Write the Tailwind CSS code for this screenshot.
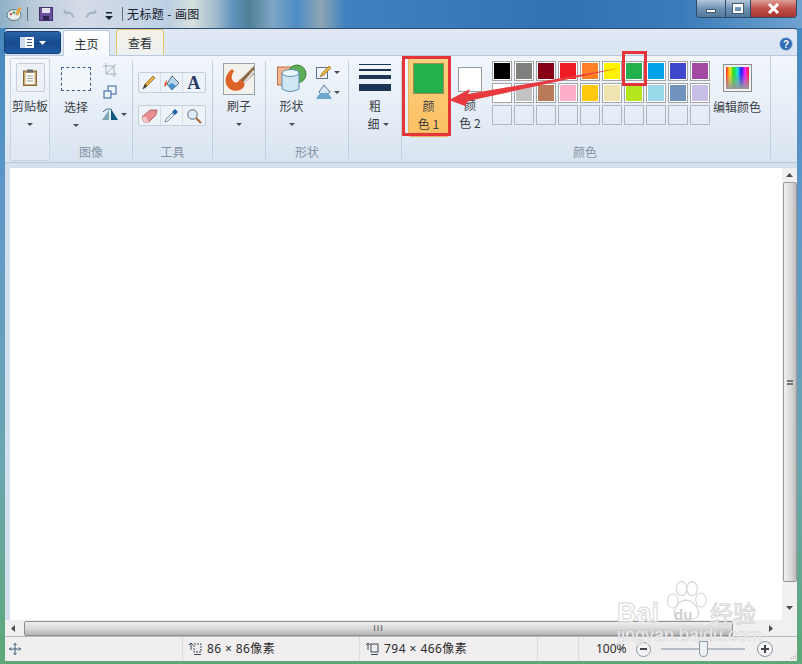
<!DOCTYPE html>
<html lang="zh">
<head>
<meta charset="UTF-8">
<title>无标题 - 画图</title>
<script src="https://cdn.jsdelivr.net/npm/@tailwindcss/browser@4"></script>
</head>
<body class="w-[802px] h-[664px] overflow-hidden font-['Noto_Sans_CJK_SC','Noto_Sans',sans-serif] text-[12px] text-[#3c4046]">
<div class="relative w-[802px] h-[664px] overflow-hidden flex flex-col bg-[linear-gradient(180deg,#3f86bd_0%,#5f97c8_30%,#6aa6b0_70%,#5da877_100%)] px-[5px] pb-[3px]">

  <!-- 标题栏 -->
  <div class="relative h-[28px] -mx-[5px] px-[5px] shrink-0 flex items-center bg-[linear-gradient(90deg,#8fb0c8_0%,#b9c9d8_4%,#d6dbe8_10%,#c4d4e6_18%,#bccfe2_21%,#d6e0dc_24%,#9fb9cc_27%,#5f93bd_29%,#4f7f98_31%,#7ea6c4_34%,#4d8cc4_37%,#8ea5b4_40%,#3f82c0_43%,#2f73b3_70%,#3a7cba_85%,#6fa2cf_100%)]">
    <svg class="ml-[1px]" width="16" height="16" viewBox="0 0 16 16"><ellipse cx="8" cy="9" rx="7" ry="5.5" fill="#e8edf0" stroke="#5a7a70"/><circle cx="5" cy="8" r="1.3" fill="#d9534f"/><circle cx="8" cy="6.5" r="1.3" fill="#4c9f50"/><circle cx="11" cy="8" r="1.3" fill="#3d78c2"/><rect x="11" y="1" width="3" height="8" fill="#e8a33d" transform="rotate(25 12 5)"/></svg>
    <div class="w-px h-[14px] bg-[#5d7380] ml-[5px]"></div>
    <svg class="ml-[11px]" width="14" height="14" viewBox="0 0 14 14"><rect x="0.5" y="0.5" width="13" height="13" fill="#6c4f9c" stroke="#43306f"/><rect x="3" y="1" width="8" height="5" fill="#e4e2ee"/><rect x="4" y="9" width="6" height="4" fill="#2f2550"/></svg>
    <svg class="ml-[9px]" width="14" height="12" viewBox="0 0 16 12"><path d="M13 10C12 5 8 3 3 5M3 5V1M3 5H8" fill="none" stroke="#a4b4c0" stroke-width="2.2"/></svg>
    <svg class="ml-[8px]" width="14" height="12" viewBox="0 0 16 12"><path d="M3 10C4 5 8 3 13 5M13 5V1M13 5H8" fill="none" stroke="#a4b4c0" stroke-width="2.2"/></svg>
    <svg class="ml-[7px] mt-[3px]" width="8" height="8" viewBox="0 0 8 8"><rect x="1" y="0" width="6" height="1.5" fill="#1c2530"/><path d="M0 4H8L4 8Z" fill="#1c2530"/></svg>
    <div class="w-px h-[14px] bg-[#5d7380] ml-[9px]"></div>
    <span class="ml-[4px] text-[12px] tracking-[.4px] text-[#14202c]">无标题 - 画图</span>
    <!-- 窗口按钮 -->
    <div class="absolute right-[5px] top-0 h-[18px] w-[101px] flex rounded-b-[4px] border border-t-0 border-[#2d4a66] overflow-hidden">
      <div class="w-[28px] flex items-center justify-center bg-[linear-gradient(180deg,#b4c8da,#6f92b2_50%,#55799b)]"><div class="w-[10px] h-[4px] mt-[4px] bg-white border border-[#44596e]"></div></div>
      <div class="w-[26px] flex items-center justify-center border-x border-[#2d4a66] bg-[linear-gradient(180deg,#b4c8da,#6f92b2_50%,#55799b)]"><div class="w-[10px] h-[9px] border-2 border-t-[3px] border-white outline outline-[#44596e]"></div></div>
      <div class="flex-1 flex items-center justify-center bg-[linear-gradient(180deg,#dd9f96,#c0504a_50%,#a8342e)]">
        <svg width="13" height="11" viewBox="0 0 13 11"><path d="M2 1L11 10M11 1L2 10" stroke="#fff" stroke-width="3"/></svg>
      </div>
    </div>
  </div>

  <!-- 选项卡行 -->
  <div class="h-[27px] shrink-0 flex items-end bg-[linear-gradient(180deg,#dfe8f4,#dbe5f2)] border-t border-[#33506e] rounded-t-[3px] relative">
    <div class="ml-[-1px] mb-[1px] w-[57px] h-[23px] self-start mt-[2px] rounded-[3px] flex items-center justify-center gap-[5px] bg-[linear-gradient(180deg,#2a62a8,#174b8c_50%,#1d5aa3)] border border-[#173f72]">
      <svg width="14" height="11" viewBox="0 0 14 11"><rect width="5" height="11" fill="#cfdcec"/><rect x="5" width="9" height="11" fill="#fff"/><path d="M7 2.5H12M7 5.5H12M7 8.5H12" stroke="#3a5f90"/></svg>
      <svg width="7" height="4" viewBox="0 0 7 4"><path d="M0 0H7L3.5 4Z" fill="#fff"/></svg>
    </div>
    <div class="ml-[2px] w-[47px] h-[26px] rounded-t-[3px] border border-b-0 border-[#bccbdc] bg-[linear-gradient(180deg,#fff,#f4f8fc)] flex items-center justify-center relative top-px z-10 text-[#2c3138]">主页</div>
    <div class="ml-[6px] w-[48px] h-[26px] rounded-t-[3px] border border-b-0 border-[#e6c47c] bg-[linear-gradient(180deg,#f4f1e6,#eef1f2)] flex items-center justify-center text-[#2c3138]">查看</div>
    <svg class="absolute right-[4px] top-[8px]" width="14" height="14" viewBox="0 0 14 14"><circle cx="7" cy="7" r="6.5" fill="#2f6db5" stroke="#b9cfe6"/><text x="7" y="10.5" text-anchor="middle" font-size="10" font-weight="700" fill="#fff" font-family="Liberation Sans">?</text></svg>
  </div>

  <!-- 功能区 -->
  <div class="h-[108px] shrink-0 flex border-y border-[#b9c8da] bg-[linear-gradient(180deg,#f2f6fc_0%,#e9f0f8_40%,#d9e4f1_100%)] pl-[5px] pt-[2px]">
    <!-- 剪贴板 -->
    <div class="w-[40px] h-[103px] rounded-[2px] border border-[#c8d4e2] bg-[linear-gradient(180deg,#f4f8fc,#dfe8f3)] flex flex-col items-center">
      <div class="mt-[4px] w-[29px] h-[29px] rounded-[2px] border border-[#c4cfdb] bg-[#eef2f6] flex items-center justify-center">
        <svg width="14" height="17" viewBox="0 0 14 17"><rect x="0.5" y="2" width="13" height="14.5" fill="#c9a772" stroke="#85653a"/><rect x="2.5" y="4" width="9" height="11" fill="#fdfdf8"/><path d="M4 7H10M4 9.5H10M4 12H10" stroke="#9a9a92"/><rect x="4" y="0.5" width="6" height="3" fill="#6b6b6b"/></svg>
      </div>
      <span class="mt-[4px] leading-[20px] whitespace-nowrap">剪贴板</span>
      <svg class="mt-[7px]" width="6" height="3" viewBox="0 0 6 3"><path d="M0 0H6L3 3Z" fill="#4a4f56"/></svg>
    </div>
    <!-- 图像 -->
    <div class="w-[83px] relative flex flex-col items-center border-r border-[#c3cfdd] my-[3px]">
      <div class="flex w-full pl-[5px] pt-[3px] h-[88px]">
        <div class="w-[42px] flex flex-col items-center">
          <div class="w-[30px] h-[24px] mt-[3px] border border-dashed border-[#3e5f86] bg-[#f1f6fb]"></div>
          <span class="mt-[6px] leading-[20px]">选择</span>
          <svg class="mt-[7px]" width="6" height="3" viewBox="0 0 6 3"><path d="M0 0H6L3 3Z" fill="#4a4f56"/></svg>
        </div>
        <div class="flex flex-col items-start gap-[8px] -mt-[1px] ml-[6px]">
          <svg width="14" height="14" viewBox="0 0 14 14"><path d="M3 0V11H14M0 3H11V14M3 11L13 1" fill="none" stroke="#a8b2bd"/></svg>
          <svg width="14" height="14" viewBox="0 0 14 14"><rect x="5" y="1" width="8" height="8" fill="#eef4fb" stroke="#2f5f9c"/><rect x="1" y="6" width="7" height="7" fill="#eef4fb" stroke="#2f5f9c"/></svg>
          <div class="flex items-center gap-[2px] -ml-[2px]">
            <svg width="18" height="14" viewBox="0 0 18 14"><path d="M1 13L8 3V13Z" fill="#7fa9b5"/><path d="M10 13V2L17 13Z" fill="#0f5a7d"/><path d="M2 5Q6 0 11 3" fill="none" stroke="#3a6c7f"/></svg>
            <svg width="6" height="3" viewBox="0 0 6 3"><path d="M0 0H6L3 3Z" fill="#4a4f56"/></svg>
          </div>
        </div>
      </div>
      <span class="text-[#8492a3] leading-[14px]">图像</span>
    </div>
    <!-- 工具 -->
    <div class="w-[80px] flex flex-col items-center border-r border-[#c3cfdd] my-[3px]">
      <div class="h-[88px] pt-[11px] mr-[2px] flex flex-col gap-[12px]">
        <div class="w-[68px] h-[21px] flex rounded-[2px] border border-[#c4cfdb] bg-[#eef3f9] divide-x divide-[#d4dde8]">
          <div class="flex-1 flex items-center justify-center"><svg width="14" height="15" viewBox="0 0 14 15"><path d="M1 14L3 9L11 1L13 3L5 11Z" fill="#e8b33d" stroke="#7b5c24" stroke-width=".7"/><path d="M1 14L3 9L5 11Z" fill="#333"/></svg></div>
          <div class="flex-1 flex items-center justify-center"><svg width="17" height="16" viewBox="0 0 17 16"><path d="M9 1L16 8L9 15L4 9Z" fill="#b9d8ee" stroke="#5a6d80"/><path d="M5 10L9 15L13 11L9 8Z" fill="#4a90c9"/><path d="M4 5Q0 9 2 12Q4 10 4 7" fill="#d9552e"/></svg></div>
          <div class="flex-1 flex items-center justify-center font-['Liberation_Serif',serif] font-bold text-[18px] leading-none text-[#253d66]">A</div>
        </div>
        <div class="w-[68px] h-[21px] flex rounded-[2px] border border-[#c4cfdb] bg-[#eef3f9] divide-x divide-[#d4dde8]">
          <div class="flex-1 flex items-center justify-center"><svg width="17" height="14" viewBox="0 0 17 14"><path d="M1 8L9 1H16L15 6L8 13H3Z" fill="#ea8d90" stroke="#9d4c50" stroke-width=".7"/><path d="M1 8L3 13H8L5 8Z" fill="#f4c6c6"/></svg></div>
          <div class="flex-1 flex items-center justify-center"><svg width="15" height="15" viewBox="0 0 15 15"><path d="M1 14L2 11L8 5L10 7L4 13Z" fill="#dfe9f2" stroke="#59708a" stroke-width=".7"/><path d="M8 4L11 1L14 4L11 7Z" fill="#1f5fa0"/></svg></div>
          <div class="flex-1 flex items-center justify-center"><svg width="16" height="16" viewBox="0 0 16 16"><circle cx="6.5" cy="6.5" r="4.7" fill="#dcebf7" stroke="#8b97a5" stroke-width="1.4"/><path d="M10 10L15 15" stroke="#a86f3c" stroke-width="2.2"/></svg></div>
        </div>
      </div>
      <span class="text-[#8492a3] leading-[14px]">工具</span>
    </div>
    <!-- 刷子 -->
    <div class="w-[53px] flex flex-col items-center border-r border-[#c3cfdd] my-[3px]">
      <div class="h-[88px] flex flex-col items-center">
        <svg class="mt-[2px]" width="32" height="32" viewBox="0 0 32 32"><rect x="0.5" y="0.5" width="31" height="31" fill="#f3f1ec" stroke="#9aa2aa"/><path d="M31 3L17 17L21 21L31 11Z" fill="#8d6a45"/><path d="M31 8L21 20" stroke="#dcdcdc" stroke-width="2.5"/><path d="M9 6Q1 12 3 21Q7 30 17 27Q23 24 21 20L17 16Q14 22 10 18Q7 14 11 8Z" fill="#dd6228"/></svg>
        <span class="mt-[1px] leading-[20px]">刷子</span>
        <svg class="mt-[7px]" width="6" height="3" viewBox="0 0 6 3"><path d="M0 0H6L3 3Z" fill="#4a4f56"/></svg>
      </div>
    </div>
    <!-- 形状 -->
    <div class="w-[83px] flex flex-col items-center border-r border-[#c3cfdd] my-[3px]">
      <div class="h-[88px] w-full flex pl-[9px]">
        <div class="w-[33px] flex flex-col items-center">
          <svg class="mt-[2px]" width="30" height="30" viewBox="0 0 30 30"><rect x="0.5" y="4" width="20" height="18" fill="#f3b48e" stroke="#c0714a"/><circle cx="20" cy="11" r="9" fill="#5dae57" stroke="#3d8138"/><path d="M5 10V26Q13 31 22 26V10Z" fill="#cfe6f5" stroke="#5a8fb2"/><ellipse cx="13.5" cy="10" rx="8.5" ry="3.5" fill="#e9f4fb" stroke="#5a8fb2"/></svg>
          <span class="mt-[3px] leading-[20px]">形状</span>
          <svg class="mt-[7px]" width="6" height="3" viewBox="0 0 6 3"><path d="M0 0H6L3 3Z" fill="#4a4f56"/></svg>
        </div>
        <div class="flex flex-col gap-[4px] mt-[4px] ml-[8px]">
          <div class="flex items-center gap-[2px]">
            <svg width="16" height="15" viewBox="0 0 16 15"><rect x="0.5" y="2.5" width="11" height="11" fill="#f3f7fb" stroke="#5a7391"/><path d="M4 12L6 8L13 1L15 3L8 10Z" fill="#e8b33d" stroke="#7b5c24" stroke-width=".6"/></svg>
            <svg width="6" height="3" viewBox="0 0 6 3"><path d="M0 0H6L3 3Z" fill="#4a4f56"/></svg>
          </div>
          <div class="flex items-center gap-[2px]">
            <svg width="16" height="16" viewBox="0 0 16 16"><path d="M8 1L14 8L8 13L3 8Z" fill="#d7e7f3" stroke="#5a7391"/><path d="M0 15L4 9H12L16 15Z" fill="#6fa6cf"/></svg>
            <svg width="6" height="3" viewBox="0 0 6 3"><path d="M0 0H6L3 3Z" fill="#4a4f56"/></svg>
          </div>
        </div>
      </div>
      <span class="text-[#8492a3] leading-[14px]">形状</span>
    </div>
    <!-- 粗细 -->
    <div class="w-[53px] flex flex-col items-center border-r border-[#c3cfdd] my-[3px]">
      <div class="w-[32px] mt-[3px] flex flex-col">
        <div class="h-px bg-[#1c3554]"></div>
        <div class="h-[2px] mt-[4px] bg-[#1c3554]"></div>
        <div class="h-[4px] mt-[4px] bg-[#1c3554]"></div>
        <div class="h-[7px] mt-[5px] bg-[#1c3554]"></div>
      </div>
      <span class="mt-[5px] leading-[20px]">粗</span>
      <div class="flex items-center gap-[3px] -mr-[6px] leading-[16px]"><span>细</span><svg width="6" height="3" viewBox="0 0 6 3"><path d="M0 0H6L3 3Z" fill="#4a4f56"/></svg></div>
    </div>
    <!-- 颜色 -->
    <div class="w-[369px] flex flex-col border-r border-[#c3cfdd] my-[3px] -mt-[2px]">
      <div class="h-[91px] flex">
        <div class="ml-[6px] mt-[1px] w-[41px] h-[80px] rounded-[2px] bg-[linear-gradient(180deg,#fdd17e,#fbbf62)] border border-[#e7b164] flex flex-col items-center">
          <div class="mt-[5px] w-[31px] h-[31px] bg-[#22b14c] border border-[#a48a4e]"></div>
          <span class="mt-[3px] leading-[18px]">颜</span>
          <span class="leading-[18px]">色 1</span>
        </div>
        <div class="w-[42px] flex flex-col items-center">
          <div class="mt-[11px] w-[24px] h-[25px] bg-white border border-[#9a9a9a]"></div>
          <span class="mt-[4px] leading-[18px]">颜</span>
          <span class="leading-[18px]">色 2</span>
        </div>
        <div class="ml-[1px] mt-[5px] grid grid-cols-[repeat(10,20px)] gap-[2px] auto-rows-[20px] h-fit">
          <div class="border border-[#a5a5a5] p-px bg-white"><div class="w-full h-full bg-black"></div></div>
          <div class="border border-[#a5a5a5] p-px bg-white"><div class="w-full h-full bg-[#7f7f7f]"></div></div>
          <div class="border border-[#a5a5a5] p-px bg-white"><div class="w-full h-full bg-[#880015]"></div></div>
          <div class="border border-[#a5a5a5] p-px bg-white"><div class="w-full h-full bg-[#ed1c24]"></div></div>
          <div class="border border-[#a5a5a5] p-px bg-white"><div class="w-full h-full bg-[#ff7f27]"></div></div>
          <div class="border border-[#a5a5a5] p-px bg-white"><div class="w-full h-full bg-[#fff200]"></div></div>
          <div class="border border-[#a5a5a5] p-px bg-white"><div class="w-full h-full bg-[#22b14c]"></div></div>
          <div class="border border-[#a5a5a5] p-px bg-white"><div class="w-full h-full bg-[#00a2e8]"></div></div>
          <div class="border border-[#a5a5a5] p-px bg-white"><div class="w-full h-full bg-[#3f48cc]"></div></div>
          <div class="border border-[#a5a5a5] p-px bg-white"><div class="w-full h-full bg-[#a349a4]"></div></div>
          <div class="border border-[#a5a5a5] p-px bg-white"><div class="w-full h-full bg-white"></div></div>
          <div class="border border-[#a5a5a5] p-px bg-white"><div class="w-full h-full bg-[#c3c3c3]"></div></div>
          <div class="border border-[#a5a5a5] p-px bg-white"><div class="w-full h-full bg-[#b97a57]"></div></div>
          <div class="border border-[#a5a5a5] p-px bg-white"><div class="w-full h-full bg-[#ffaec9]"></div></div>
          <div class="border border-[#a5a5a5] p-px bg-white"><div class="w-full h-full bg-[#ffc90e]"></div></div>
          <div class="border border-[#a5a5a5] p-px bg-white"><div class="w-full h-full bg-[#efe4b0]"></div></div>
          <div class="border border-[#a5a5a5] p-px bg-white"><div class="w-full h-full bg-[#b5e61d]"></div></div>
          <div class="border border-[#a5a5a5] p-px bg-white"><div class="w-full h-full bg-[#99d9ea]"></div></div>
          <div class="border border-[#a5a5a5] p-px bg-white"><div class="w-full h-full bg-[#7092be]"></div></div>
          <div class="border border-[#a5a5a5] p-px bg-white"><div class="w-full h-full bg-[#c8bfe7]"></div></div>
          <div class="border border-[#b0b7bf]"></div><div class="border border-[#b0b7bf]"></div><div class="border border-[#b0b7bf]"></div><div class="border border-[#b0b7bf]"></div><div class="border border-[#b0b7bf]"></div>
          <div class="border border-[#b0b7bf]"></div><div class="border border-[#b0b7bf]"></div><div class="border border-[#b0b7bf]"></div><div class="border border-[#b0b7bf]"></div><div class="border border-[#b0b7bf]"></div>
        </div>
        <div class="flex flex-col items-center w-[50px] ml-[2px]">
          <div class="mt-[8px] w-[29px] h-[28px] border border-[#8c8c8c] p-[2px] bg-[#f2f2f2]"><div class="w-full h-full bg-[linear-gradient(180deg,transparent_30%,#9a9a9a_100%),linear-gradient(90deg,#ff2020,#ffe020,#20e020,#20e0e0,#2020ff,#ff20ff,#ff2020)]"></div></div>
          <span class="mt-[5px] leading-[20px] whitespace-nowrap">编辑颜色</span>
        </div>
      </div>
      <span class="text-[#8492a3] leading-[14px] text-center -ml-[2px]">颜色</span>
    </div>
  </div>

  <!-- 画布区域 -->
  <div class="flex-1 min-h-0 relative bg-[#d5e0ee] flex flex-col">
    <div class="flex-1 min-h-0 flex">
      <div class="flex-1 pt-[5px] pl-[5px] flex flex-col">
        <div class="flex-1 bg-white"></div>
      </div>
      <!-- 垂直滚动条 -->
      <div class="w-[15px] bg-[#f0f0f0] mt-[5px] flex flex-col items-center">
        <svg class="mt-[5px] mb-[5px]" width="7" height="4" viewBox="0 0 7 4"><path d="M0 4H7L3.5 0Z" fill="#4a4f56"/></svg>
        <div class="w-[14px] h-[400px] flex items-center justify-center rounded-[2px] border border-[#9a9a9a] bg-[linear-gradient(90deg,#f0f0f0,#d8d8d8_60%,#bcbcbc)]">
          <div class="w-[6px] h-[5px] border-y-2 border-[#777]"></div>
        </div>
        <svg class="mt-[24px]" width="7" height="4" viewBox="0 0 7 4"><path d="M0 0H7L3.5 4Z" fill="#4a4f56"/></svg>
      </div>
    </div>
    <!-- 水平滚动条 -->
    <div class="h-[16px] shrink-0 bg-[#f0f0f0] flex items-center pl-[6px]">
      <svg width="4" height="7" viewBox="0 0 4 7"><path d="M4 0V7L0 3.5Z" fill="#4a4f56"/></svg>
      <div class="ml-[9px] w-[709px] h-[15px] rounded-[2px] flex items-center justify-center border border-[#8f8f8f] bg-[linear-gradient(180deg,#f0f0f0,#d8d8d8_50%,#b4b4b4)]">
        <span class="font-['Liberation_Sans',sans-serif] text-[9px] text-[#555] tracking-[1px] leading-none">III</span>
      </div>
      <svg class="ml-[36px]" width="4" height="7" viewBox="0 0 4 7"><path d="M0 0V7L4 3.5Z" fill="#4a4f56"/></svg>
    </div>
    <!-- 状态栏 -->
    <div class="h-[25px] shrink-0 flex items-center relative bg-[#f0eeee] border-t border-[#b5bcc4] text-[#2c2c2c] font-['Noto_Sans','Noto_Sans_CJK_SC',sans-serif]">
      <div class="w-[178px] h-full pl-[4px] flex items-center border-r border-[#dcdcdc]">
        <svg width="12" height="12" viewBox="0 0 12 12"><path d="M6 0V12M0 6H12M4.5 2L6 .5L7.5 2M4.5 10L6 11.5L7.5 10M2 4.5L.5 6L2 7.5M10 4.5L11.5 6L10 7.5" fill="none" stroke="#3f5f7e"/></svg>
      </div>
      <div class="w-[177px] h-full pl-[5px] flex items-center gap-[5px] border-r border-[#dcdcdc]">
        <svg width="14" height="14" viewBox="0 0 14 14"><path d="M3 1V8M1 3L3 1L5 3" fill="none" stroke="#3a4a5a"/><rect x="6" y="2" width="7" height="8" fill="none" stroke="#3a4a5a" stroke-dasharray="2 1"/><path d="M6 12.5H13" stroke="#3a4a5a"/></svg>
        <span class="whitespace-nowrap tracking-[.4px]">86 × 86像素</span>
      </div>
      <div class="w-[178px] h-full pl-[5px] flex items-center gap-[5px] border-r border-[#dcdcdc]">
        <svg width="14" height="14" viewBox="0 0 14 14"><path d="M3 1V8M1 3L3 1L5 3" fill="none" stroke="#3a4a5a"/><rect x="6" y="2" width="7" height="8" fill="none" stroke="#3a4a5a"/><path d="M6 12.5H13" stroke="#3a4a5a"/></svg>
        <span class="whitespace-nowrap tracking-[.45px]">794 × 466像素</span>
      </div>
      <div class="w-[41px] h-full border-r border-[#dcdcdc]"></div>
      <span class="ml-[17px] w-[34px] whitespace-nowrap leading-[14px]">100%</span>
      <div class="ml-[6px] w-[15px] h-[15px] rounded-full border border-[#8d98a5] bg-[#f2f4f6] flex items-center justify-center"><div class="w-[7px] h-[2px] bg-[#444]"></div></div>
      <div class="ml-[10px] w-[84px] h-[2px] bg-[#b9bfc6] relative">
        <div class="absolute left-[38px] -top-[7px] w-[9px] h-[16px] rounded-b-[4px] border border-[#8d98a5] bg-[#eef1f4]"></div>
      </div>
      <div class="ml-[12px] w-[16px] h-[16px] rounded-full border border-[#8d98a5] bg-[#f2f4f6] flex items-center justify-center relative"><div class="w-[8px] h-[2px] bg-[#444]"></div><div class="absolute w-[2px] h-[8px] bg-[#444]"></div></div>
      <svg class="absolute right-0 bottom-0" width="8" height="8" viewBox="0 0 8 8"><path d="M6 1H7V2H6ZM4 3H5V4H4ZM6 3H7V4H6ZM2 5H3V6H2ZM4 5H5V6H4ZM6 5H7V6H6Z" fill="#a8b0b8"/></svg>
    </div>
  </div>

  <!-- 百度经验水印 -->
  <div class="absolute left-[617px] top-[575px] w-[150px] h-[75px] pointer-events-none">
    <svg class="absolute left-[47px] top-[2px]" width="44" height="48" viewBox="0 0 50 50"><g fill="rgba(255,255,255,.8)" stroke="#d5d5d5" stroke-width="1.2"><ellipse cx="10" cy="25" rx="6" ry="8"/><ellipse cx="20" cy="11" rx="6" ry="8"/><ellipse cx="32" cy="11" rx="6" ry="8"/><ellipse cx="42" cy="24" rx="6" ry="8"/><path d="M25 24C15 24 9 38 13 43C18 48 32 48 38 43C42 38 35 24 25 24Z"/></g></svg>
    <span class="absolute left-0 top-[25px] font-['Liberation_Sans',sans-serif] font-bold text-[27px] leading-none [-webkit-text-stroke:1px_#d8d8d8] text-white/60">Bai</span>
    <span class="absolute left-[57px] top-[32px] font-['Liberation_Sans',sans-serif] font-bold text-[15px] leading-none text-[#d0d0d0]">du</span>
    <span class="absolute left-[93px] top-[26px] text-[23px] leading-none text-white/60 [-webkit-text-stroke:1px_#d8d8d8]">经验</span>
    <span class="absolute left-0 top-[54px] font-['Liberation_Sans',sans-serif] text-[18px] leading-[12px] text-[#f4f4f4] [-webkit-text-stroke:.4px_#cfcfcf]">jingyan.baidu.com</span>
  </div>

  <!-- 红色标注 -->
  <div class="absolute left-[402px] top-[56px] w-[49px] h-[80px] border-[3px] border-[#e5343a]"></div>
  <div class="absolute left-[622px] top-[51px] w-[25px] h-[35px] border-[3px] border-[#e5343a]"></div>
  <svg class="absolute left-[445px] top-[60px]" width="185" height="50" viewBox="0 0 185 50"><path d="M4 40L25 29L23 34L175 8L23 41L20 46Z" fill="#e83a3e"/></svg>
</div>
</body>
</html>
